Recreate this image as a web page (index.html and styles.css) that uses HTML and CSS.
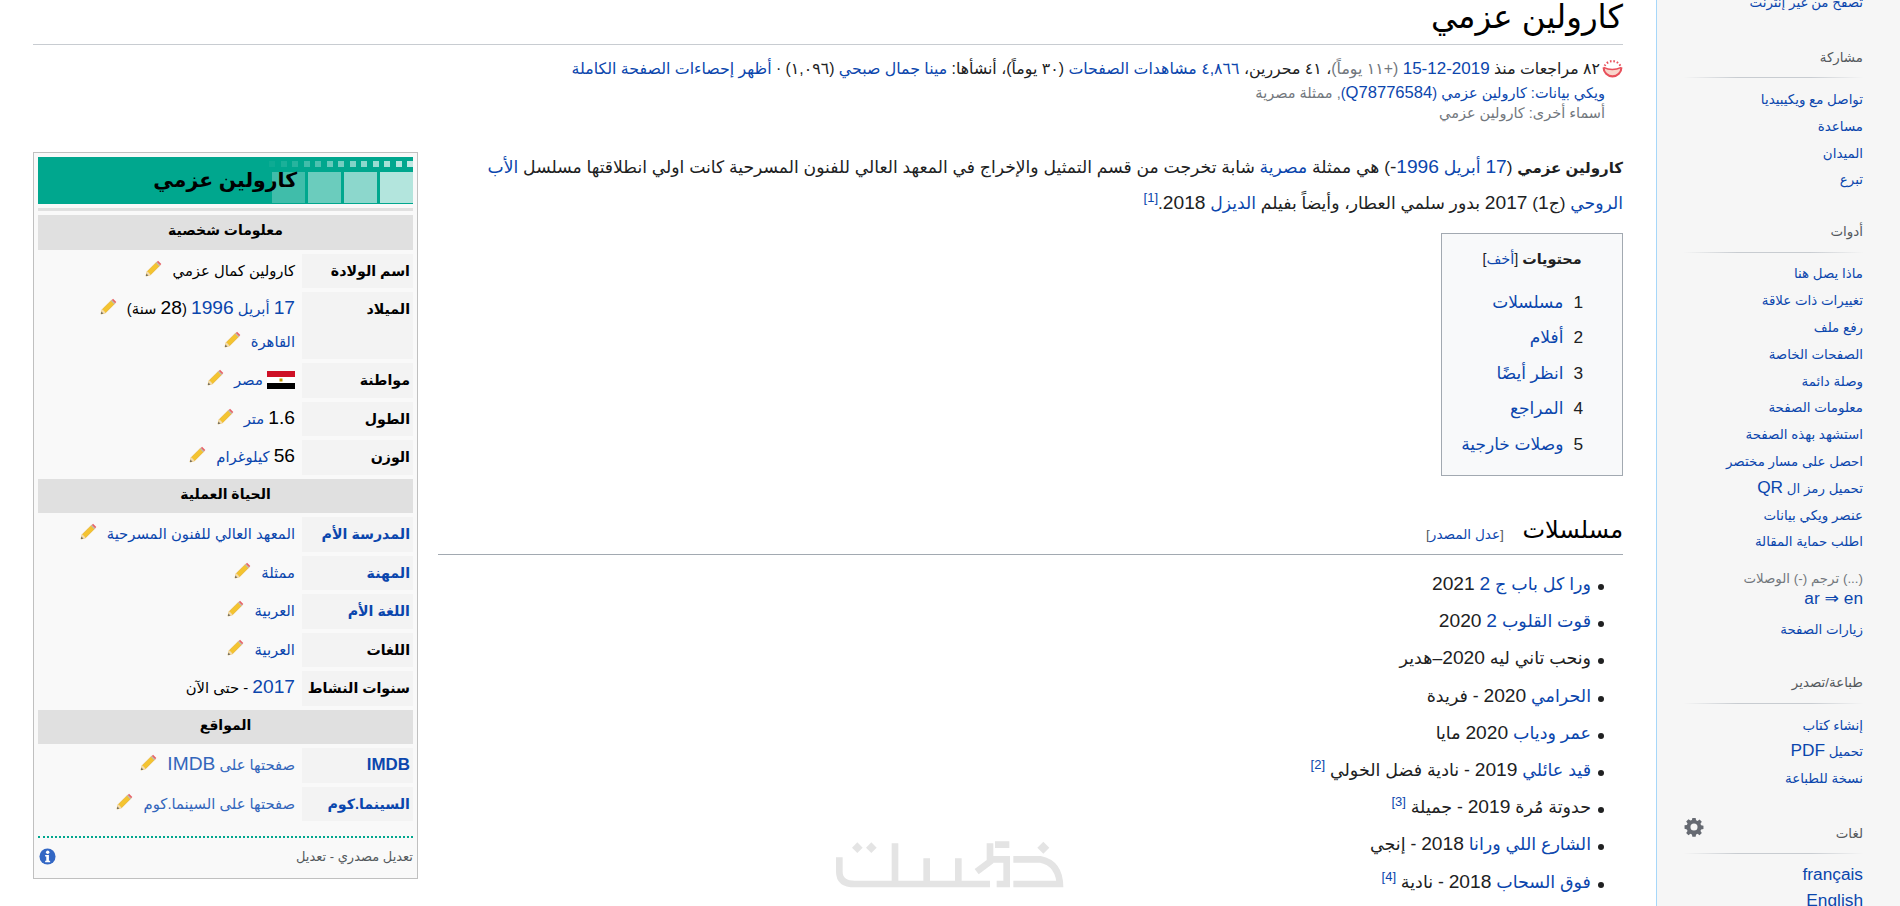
FILE: index.html
```html
<!DOCTYPE html>
<html lang="ar" dir="rtl">
<head>
<meta charset="utf-8">
<title>كارولين عزمي</title>
<link rel="stylesheet" href="styles.css">
</head>
<body>
<svg class="defs" width="0" height="0" aria-hidden="true">
  <defs>
    <symbol id="pencil" viewBox="0 0 18 18">
      <path d="M1 17l1.500-5L12.500 2l3.500 3.500-10 10z" fill="#f4c430" stroke="#e0a526" stroke-width=".6"/>
      <path d="M1 17l1.500-5 3.500 3.500z" fill="#f3dcb0"/>
      <path d="M1 17l.7-2.400 1.700 1.700z" fill="#555"/>
      <path d="M12.500 2l1.300-1.300 3.500 3.500L16 5.500z" fill="#e8636b"/>
      <path d="M11.500 3l1-1 3.500 3.500-1 1z" fill="#bbb"/>
    </symbol>
  </defs>
</svg>
<div class="page">
  <aside class="side">
    <ul class="links clipped">
      <li><a>تصفح من غير إنترنت</a></li>
    </ul>
    <section class="portal">
      <h3>مشاركة</h3>
      <ul class="links">
        <li><a>تواصل مع ويكيبيديا</a></li>
        <li><a>مساعدة</a></li>
        <li><a>الميدان</a></li>
        <li><a>تبرع</a></li>
      </ul>
    </section>
    <section class="portal">
      <h3>أدوات</h3>
      <ul class="links">
        <li><a>ماذا يصل هنا</a></li>
        <li><a>تغييرات ذات علاقة</a></li>
        <li><a>رفع ملف</a></li>
        <li><a>الصفحات الخاصة</a></li>
        <li><a>وصلة دائمة</a></li>
        <li><a>معلومات الصفحة</a></li>
        <li><a>استشهد بهذه الصفحة</a></li>
        <li><a>احصل على مسار مختصر</a></li>
        <li><a>تحميل رمز ال <span class="n">QR</span></a></li>
        <li><a>عنصر ويكي بيانات</a></li>
        <li><a>اطلب حماية المقالة</a></li>
      </ul>
      <div class="translate">
        <div class="tan">(...) ترجم (-) الوصلات</div>
        <div><a class="n">ar ⇒ en</a></div>
      </div>
      <ul class="links">
        <li><a>زيارات الصفحة</a></li>
      </ul>
    </section>
    <section class="portal print">
      <h3>طباعة/تصدير</h3>
      <ul class="links">
        <li><a>إنشاء كتاب</a></li>
        <li><a>تحميل <span class="n">PDF</span></a></li>
        <li><a>نسخة للطباعة</a></li>
      </ul>
    </section>
    <section class="portal lang">
      <svg class="gear" viewBox="-1 -1 22 22" aria-hidden="true"><path fill="#666a72" fill-rule="evenodd" d="M8.200 0h3.600l.5 2.600 1.600.7 2.200-1.500 2.500 2.500-1.500 2.200.7 1.600 2.600.5v3.600l-2.600.5-.7 1.600 1.500 2.200-2.500 2.500-2.200-1.500-1.600.7-.5 2.600H8.200l-.5-2.600-1.600-.7-2.200 1.500-2.500-2.500 1.500-2.200-.7-1.600L-.4 11.800V8.200l2.600-.5.7-1.600L1.400 3.900l2.500-2.500 2.200 1.500 1.600-.7zM10 6.100a3.900 3.900 0 1 0 0 7.800 3.900 3.900 0 0 0 0-7.800z"/></svg>
      <h3>لغات</h3>
      <ul class="links">
        <li><a class="n">français</a></li>
        <li><a class="n">English</a></li>
      </ul>
    </section>
  </aside>

  <main class="main">
    <h1 class="title">كارولين عزمي</h1>
    <div class="stats">
      <svg class="clock" viewBox="0 0 20 20" aria-hidden="true">
        <path d="M1.500 8a8.500 8.500 0 0 0 17 0q-8 4-17 0z" fill="#f9d5cb"/>
        <path d="M1.500 8a8.500 8.500 0 1 0 17 0" fill="none" stroke="#e8505b" stroke-width="2"/>
        <path d="M1.500 8q8 4 17 0" fill="none" stroke="#e8505b" stroke-width="1.500"/>
        <path d="M2.500 6.500A8.500 8.500 0 0 1 17.500 6.500" fill="none" stroke="#e8505b" stroke-width="2" stroke-dasharray="1.500 1.800"/>
      </svg>
      <span>٨٢ مراجعات منذ <a class="n">2019-12-15</a> <span class="muted">(+١١ يوماً)</span>، ٤١ محررين، <a>٤,٨٦٦ مشاهدات الصفحات</a> (٣٠ يوماً)، أنشأها: <a>مينا جمال صبحي</a> (١,٠٩٦) · <a>أظهر إحصاءات الصفحة الكاملة</a></span>
    </div>
    <div class="sub">
      <div><a>ويكي بيانات: كارولين عزمي (<span class="n">Q78776584</span>)</a>, ممثلة مصرية</div>
      <div>أسماء أخرى: كارولين عزمي</div>
    </div>

    <div class="content">
      <aside class="infobox">
        <div class="ib-title">
          <div class="film" aria-hidden="true">
            <div class="holes"><i></i><i></i><i></i><i></i><i></i><i></i><i></i><i></i><i></i><i></i><i></i><i></i><i></i></div>
            <div class="frames"><i></i><i></i><i></i><i></i></div>
          </div>
          <span>كارولين عزمي</span>
        </div>
        <div class="ib-strip"></div>
        <div class="ib-head">معلومات شخصية</div>
        <div class="ib-row"><div class="ib-label">اسم الولادة</div><div class="ib-val">كارولين كمال عزمي <svg class="pen"><use href="#pencil"/></svg></div></div>
        <div class="ib-row"><div class="ib-label">الميلاد</div><div class="ib-val"><div><a><span class="n">17</span> أبريل</a> <a class="n">1996</a> (<span class="n">28</span> سنة) <svg class="pen"><use href="#pencil"/></svg></div><div><a>القاهرة</a> <svg class="pen"><use href="#pencil"/></svg></div></div></div>
        <div class="ib-row"><div class="ib-label">مواطنة</div><div class="ib-val"><svg class="flag" viewBox="0 0 28 18" aria-hidden="true"><rect width="28" height="6" fill="#ce1126"/><rect y="6" width="28" height="6" fill="#fff"/><rect y="12" width="28" height="6" fill="#000"/><rect x="12.500" y="7.500" width="3" height="3" fill="#c09300"/></svg> <a>مصر</a> <svg class="pen"><use href="#pencil"/></svg></div></div>
        <div class="ib-row"><div class="ib-label">الطول</div><div class="ib-val"><span class="n">1.6</span> <a>متر</a> <svg class="pen"><use href="#pencil"/></svg></div></div>
        <div class="ib-row"><div class="ib-label">الوزن</div><div class="ib-val"><span class="n">56</span> <a>كيلوغرام</a> <svg class="pen"><use href="#pencil"/></svg></div></div>
        <div class="ib-head">الحياة العملية</div>
        <div class="ib-row"><div class="ib-label"><a>المدرسة الأم</a></div><div class="ib-val"><a>المعهد العالي للفنون المسرحية</a> <svg class="pen"><use href="#pencil"/></svg></div></div>
        <div class="ib-row"><div class="ib-label"><a>المهنة</a></div><div class="ib-val"><a>ممثلة</a> <svg class="pen"><use href="#pencil"/></svg></div></div>
        <div class="ib-row"><div class="ib-label"><a>اللغة الأم</a></div><div class="ib-val"><a>العربية</a> <svg class="pen"><use href="#pencil"/></svg></div></div>
        <div class="ib-row"><div class="ib-label">اللغات</div><div class="ib-val"><a>العربية</a> <svg class="pen"><use href="#pencil"/></svg></div></div>
        <div class="ib-row"><div class="ib-label">سنوات النشاط</div><div class="ib-val"><a class="n">2017</a> - حتى الآن</div></div>
        <div class="ib-head">المواقع</div>
        <div class="ib-row"><div class="ib-label"><a class="n">IMDB</a></div><div class="ib-val"><a class="ext">صفحتها على <span class="n">IMDB</span></a> <svg class="pen"><use href="#pencil"/></svg></div></div>
        <div class="ib-row"><div class="ib-label"><a>السينما.كوم</a></div><div class="ib-val"><a class="ext">صفحتها على السينما.كوم</a> <svg class="pen"><use href="#pencil"/></svg></div></div>
        <div class="ib-foot">
          <span>تعديل مصدري - تعديل</span>
          <svg class="info" viewBox="0 0 18 18" aria-hidden="true"><circle cx="9" cy="9" r="8.500" fill="#3367c4"/><circle cx="9.200" cy="4.500" r="1.800" fill="#fff"/><path d="M6.500 7.500h4v6h1.300v1.500H6.500v-1.500h1.200V9H6.500z" fill="#fff"/></svg>
        </div>
      </aside>

      <p class="lead"><b>كارولين عزمي</b> (<a><span class="n">17</span> أبريل</a> <a class="n">1996</a><span class="n">-</span>) هي ممثلة <a>مصرية</a> شابة تخرجت من قسم التمثيل والإخراج في المعهد العالي للفنون المسرحية كانت اولي انطلاقتها مسلسل <a>الأب الروحي</a> (ج<span class="n">1</span>) <span class="n">2017</span> بدور سلمي العطار، وأيضاً بفيلم <a>الديزل</a> <span class="n">2018</span>.<sup><a>[1]</a></sup></p>

      <nav class="toc">
        <div class="toc-title"><b>محتويات</b> [<a>أخف</a>]</div>
        <ol>
          <li><span class="n">1</span><a>مسلسلات</a></li>
          <li><span class="n">2</span><a>أفلام</a></li>
          <li><span class="n">3</span><a>انظر أيضًا</a></li>
          <li><span class="n">4</span><a>المراجع</a></li>
          <li><span class="n">5</span><a>وصلات خارجية</a></li>
        </ol>
      </nav>

      <h2 class="section">مسلسلات <small>[<a>عدل المصدر</a>]</small></h2>
      <ul class="works">
        <li><a>ورا كل باب ج <span class="n">2</span></a> <span class="n">2021</span></li>
        <li><a>قوت القلوب <span class="n">2</span></a> <span class="n">2020</span></li>
        <li>ونحب تاني ليه <span class="n">2020</span>–هدير</li>
        <li><a>الحرامي</a> <span class="n">2020</span> - فريدة</li>
        <li><a>عمر ودياب</a> <span class="n">2020</span> مايا</li>
        <li><a>قيد عائلي</a> <span class="n">2019</span> - نادية فضل الخولي <sup><a>[2]</a></sup></li>
        <li>حدوتة مُرة <span class="n">2019</span> - جميلة <sup><a>[3]</a></sup></li>
        <li><a>الشارع اللي ورانا</a> <span class="n">2018</span> - إنجي</li>
        <li><a>فوق السحاب</a> <span class="n">2018</span> - نادية <sup><a>[4]</a></sup></li>
      </ul>
    </div>
  </main>
</div>
<svg class="mark" viewBox="0 0 960 318" aria-hidden="true">
  <g fill="none" stroke="#e4e4e4" stroke-width="20">
    <path d="M178 172V215Q178 252 225 252H630"/>
    <path d="M345 130V252M440 175V252M535 175V252"/>
    <path d="M630 130V185L590 215M645 134H688M640 178H680V252H650"/>
    <path d="M700 178H780Q840 190 840 262M700 252H840"/>
  </g>
  <g fill="#e4e4e4">
    <path d="M790 125l18 18-18 18-18-18z"/>
    <path d="M232 127l16 16-16 16-16-16z"/>
    <path d="M274 127l16 16-16 16-16-16z"/>
  </g>
</svg>
</body>
</html>
```

FILE: styles.css
```css
* { box-sizing: border-box; }
html, body { margin: 0; height: 906px; overflow: hidden; background: #fff; }
body { font-family: "Liberation Sans", "DejaVu Sans", sans-serif; color: #202122; }
a { color: #0b46ad; text-decoration: none; }
.defs { position: absolute; }
.muted { color: #72777d; }
.page { display: flex; height: 906px; overflow: hidden; }
.n { font-size: 19.200px; line-height: 1; }

.side { flex: 0 0 244px; border-left: 1px solid #a7d7f9; background: #f6f6f6; padding: 0 37px 0 27px; font-size: 13.400px; }
.side .n { font-size: 17.300px; }
.side h3 { margin: 0; font-weight: 400; font-size: 13.400px; color: #54595d; line-height: 22px; padding-bottom: 8.600px; border-bottom: 1px solid transparent; border-image: linear-gradient(to right, transparent, #c8ccd1 30%, #c8ccd1 70%, transparent) 1; }
.links { list-style: none; margin: 0; padding: 0; }
.links li { line-height: 26.800px; height: 26.800px; }
.clipped { margin-top: -10px; padding-bottom: 3px; }
.portal { margin-top: 27px; position: relative; }
.portal .links { margin-top: 8.600px; }
.translate { margin-top: 11.500px; line-height: 21.500px; }
.tan { color: #72777d; }
.portal .translate + .links { margin-top: 6px; }
.print { margin-top: 29px; }
.lang { margin-top: 29.500px; }
.lang .gear { position: absolute; left: 0; top: -6px; width: 20px; height: 20px; }

.main { flex: 1; min-width: 0; padding: 0 33px 0 33px; }
.title { margin: 0; height: 45px; border-bottom: 1px solid #c8ccd1; font-weight: 400; font-size: 32.500px; line-height: 34px; color: #000; }
.stats { display: flex; gap: 2px; align-items: center; margin-top: 12px; font-size: 15.800px; line-height: 20px; font-weight: 400; white-space: nowrap; }
.stats .n { font-size: 17px; }
.clock { width: 21px; height: 21px; flex: none; margin-top: 2px; }
.sub { margin: 3px 18px 0 0; font-size: 14.500px; line-height: 20px; color: #72777d; }
.sub .n { font-size: 16.600px; }

.content { display: flow-root; margin-top: 29px; }
.infobox { float: left; width: 385px; margin: 0 20px 20px 0; padding: 4px; border: 1px solid #c0c0c0; background: #f9f9f9; }
.ib-title { position: relative; height: 47px; background: #00a78e; color: #000; font-weight: 700; font-size: 20.400px; line-height: 47px; padding-right: 116px; overflow: hidden; }
.ib-title span { position: relative; }
.film { position: absolute; top: 0; right: 0; width: 158px; height: 47px; }
.holes { display: flex; gap: 5.500px; margin-top: 4px; }
.holes i { width: 6px; height: 6px; background: #fff; flex: none; }
.holes i:nth-child(1) { opacity: .75; } .holes i:nth-child(2) { opacity: .7; } .holes i:nth-child(3) { opacity: .65; }
.holes i:nth-child(4) { opacity: .6; } .holes i:nth-child(5) { opacity: .55; } .holes i:nth-child(6) { opacity: .5; }
.holes i:nth-child(7) { opacity: .45; } .holes i:nth-child(8) { opacity: .4; } .holes i:nth-child(9) { opacity: .3; }
.holes i:nth-child(10) { opacity: .25; } .holes i:nth-child(11) { opacity: .15; } .holes i:nth-child(12) { opacity: .1; } .holes i:nth-child(13) { opacity: .05; }
.frames { display: flex; gap: 3px; margin-top: 5px; }
.frames i { width: 33px; height: 31px; background: #fff; flex: none; }
.frames i:nth-child(1) { opacity: .7; } .frames i:nth-child(2) { opacity: .55; } .frames i:nth-child(3) { opacity: .42; } .frames i:nth-child(4) { opacity: .25; }
.ib-strip { height: 3px; margin-top: 4px; background: #e0e0e0; }
.ib-head { margin-top: 4px; height: 34.500px; background: #e0e0e0; color: #000; font-weight: 700; font-size: 14px; line-height: 30px; text-align: center; }
.ib-row { display: grid; grid-template-columns: 111px 1fr; column-gap: 4px; margin-top: 4px; font-size: 14.800px; }
.ib-label { background: #f3f3f3; padding: 3px; font-weight: 700; font-size: 14.200px; line-height: 28px; color: #000; min-height: 34.500px; white-space: nowrap; }
.ib-label .n { font-size: 16.900px; }
.ib-val { padding: 2px 3px 2px 0; line-height: 30px; color: #000; }
.ib-val div + div { margin-top: 3px; }
.ib-val .n { font-size: 19.200px; }
.pen { width: 17px; height: 17px; vertical-align: -1px; margin-right: 6px; }
.flag { width: 28px; height: 18px; vertical-align: -4px; }
.ext { color: #3366bb; }
.ib-foot { display: flex; justify-content: space-between; align-items: center; margin-top: 15px; padding: 0 0 0 1px; border-top: 2px dotted #00a78e; font-size: 13px; color: #54595d; height: 38px; }
.info { width: 17px; height: 17px; }

.lead { margin: -2px 0 0; font-size: 17.200px; line-height: 35.500px; }
.lead b { font-size: 15px; }
.lead sup, .works sup { font-size: 13px; line-height: 1; }
.toc { width: 182px; margin-top: 11.500px; padding: 14px 13px 13px; border: 1px solid #a2a9b1; background: #f8f9fa; font-size: 16px; }
.toc-title { text-align: center; line-height: 22px; margin-bottom: 15px; font-size: 14.400px; }
.toc ol { list-style: none; margin: 0; padding: 0; }
.toc li { display: flex; gap: 10px; font-size: 17px; line-height: 35.500px; padding-right: 26px; }
.toc li .n { font-size: 17.300px; line-height: 35.500px; }
.section { overflow: hidden; margin: 32px 0 0; height: 47px; border-bottom: 1px solid #a2a9b1; font-weight: 400; font-size: 24px; line-height: 44px; color: #000; }
.section small { font-size: 13.600px; margin-right: 12px; color: #54595d; vertical-align: -1px; }
.works { list-style: none; margin: 11px 19px 0 0; padding: 0; font-size: 17.500px; line-height: 37.200px; }
.works li::before { content: ""; display: inline-block; width: 6px; height: 6px; border-radius: 50%; background: #202122; margin-left: 7px; vertical-align: 0; }

.mark { position: absolute; left: 780px; top: 800px; width: 320px; height: 106px; pointer-events: none; }
```
